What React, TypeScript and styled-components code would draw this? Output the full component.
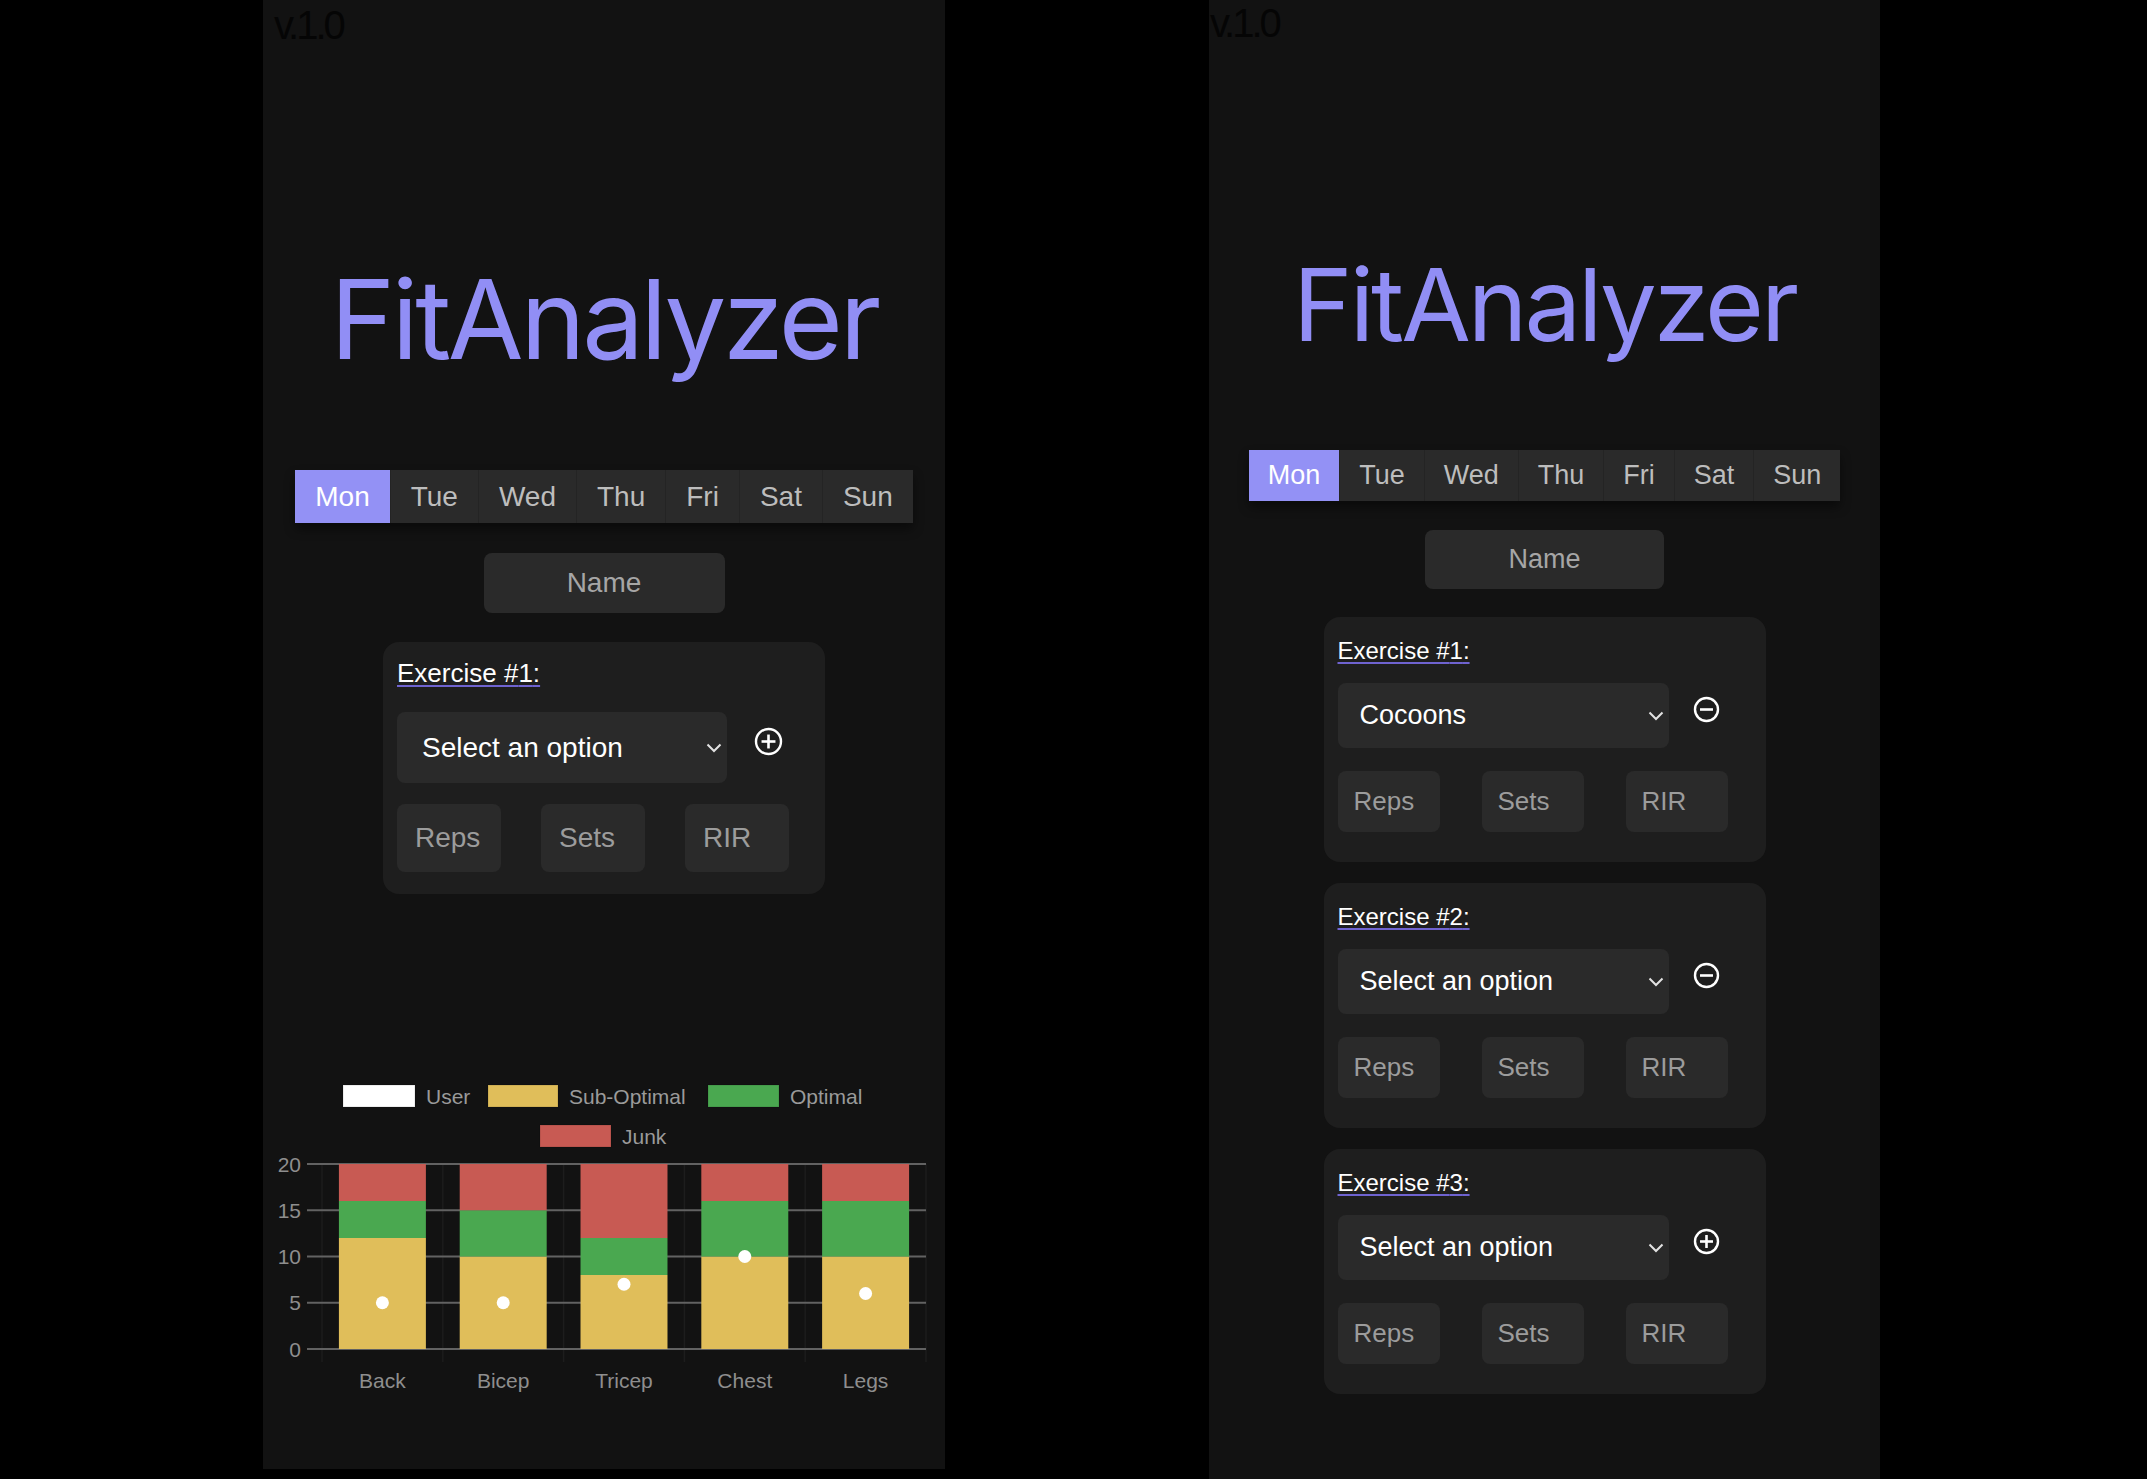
import styled, { createGlobalStyle } from "styled-components";

const GlobalStyle = createGlobalStyle`
  html, body {
    margin: 0;
    padding: 0;
    background: #000;
  }
  body {
    font-family: "Liberation Sans", Arial, sans-serif;
  }
  * {
    box-sizing: border-box;
  }
`;

interface Dims {
  width: number;
  height: number;
  verPad: number;
  verTop: number;
  titleSize: number;
  titleTop: number;
  tabsTop: number;
  tabH: number;
  tabFont: number;
  tabPad: number;
  nameTop: number;
  nameW: number;
  nameH: number;
  nameFont: number;
  cardTop: number;
  cardGap: number;
  padTop: number;
  padX: number;
  padBottom: number;
  labelFont: number;
  labelLH: number;
  labelGap: number;
  selW: number;
  selH: number;
  selFont: number;
  selPad: number;
  icon: number;
  iconGap: number;
  rowGap: number;
  inpW: number;
  inpH: number;
  inpGap: number;
  inpFont: number;
  inpPad: number;
}

const left: Dims = {
  width: 682,
  height: 1469,
  verPad: 11,
  verTop: 2,
  titleSize: 110,
  titleTop: 216,
  tabsTop: 96,
  tabH: 53,
  tabFont: 28,
  tabPad: 20,
  nameTop: 30,
  nameW: 241,
  nameH: 60,
  nameFont: 28,
  cardTop: 29,
  cardGap: 21,
  padTop: 16,
  padX: 14,
  padBottom: 22,
  labelFont: 26,
  labelLH: 30,
  labelGap: 24,
  selW: 330,
  selH: 71,
  selFont: 28,
  selPad: 25,
  icon: 29,
  iconGap: 27,
  rowGap: 21,
  inpW: 104,
  inpH: 68,
  inpGap: 40,
  inpFont: 28,
  inpPad: 18,
};

const right: Dims = {
  width: 671,
  height: 1479,
  verPad: 1,
  verTop: 0,
  titleSize: 101,
  titleTop: 208,
  tabsTop: 95,
  tabH: 51,
  tabFont: 27,
  tabPad: 19,
  nameTop: 29,
  nameW: 239,
  nameH: 59,
  nameFont: 27,
  cardTop: 28,
  cardGap: 21,
  padTop: 20,
  padX: 14,
  padBottom: 30,
  labelFont: 24,
  labelLH: 28,
  labelGap: 18,
  selW: 331,
  selH: 65,
  selFont: 27,
  selPad: 22,
  icon: 27,
  iconGap: 24,
  rowGap: 23,
  inpW: 102,
  inpH: 61,
  inpGap: 42,
  inpFont: 26,
  inpPad: 16,
};

const Page = styled.div`
  display: flex;
  align-items: flex-start;
  gap: 264px;
  padding-left: 263px;
  min-height: 1479px;
  background: #000;
`;

const Panel = styled.div<{ $d: Dims }>`
  width: ${(p) => p.$d.width}px;
  height: ${(p) => p.$d.height}px;
  background: #121212;
  display: flex;
  flex-direction: column;
  align-items: center;
`;

const Version = styled.div<{ $d: Dims }>`
  align-self: flex-start;
  margin-top: ${(p) => p.$d.verTop}px;
  padding-left: ${(p) => p.$d.verPad}px;
  font-size: 40px;
  line-height: 46px;
  letter-spacing: -3px;
  color: #050505;
`;

const Title = styled.h1<{ $d: Dims }>`
  margin: ${(p) => p.$d.titleTop}px 0 0;
  font-family: Inter, "Liberation Sans", sans-serif;
  font-weight: 400;
  font-size: ${(p) => p.$d.titleSize}px;
  line-height: 1;
  letter-spacing: -0.03em;
  color: #918ef5;
`;

const Tabs = styled.div<{ $d: Dims }>`
  display: flex;
  margin-top: ${(p) => p.$d.tabsTop}px;
  box-shadow: 0 6px 10px rgba(0, 0, 0, 0.45);
`;

const Tab = styled.div<{ $d: Dims; $active?: boolean }>`
  height: ${(p) => p.$d.tabH}px;
  padding: 0 ${(p) => p.$d.tabPad}px;
  display: flex;
  align-items: center;
  font-size: ${(p) => p.$d.tabFont}px;
  background: ${(p) => (p.$active ? "#9391f5" : "#2a2a2a")};
  color: ${(p) => (p.$active ? "#ffffff" : "#bdbdbd")};
  & + & {
    border-left: 1px solid #242424;
  }
`;

const NameInput = styled.input<{ $d: Dims }>`
  margin-top: ${(p) => p.$d.nameTop}px;
  width: ${(p) => p.$d.nameW}px;
  height: ${(p) => p.$d.nameH}px;
  border: none;
  border-radius: 8px;
  background: #2a2a2a;
  color: #fff;
  text-align: center;
  font-family: "Liberation Sans", Arial, sans-serif;
  font-size: ${(p) => p.$d.nameFont}px;
  outline: none;
  &::placeholder {
    color: #a6a6a6;
  }
`;

const CardList = styled.div<{ $d: Dims }>`
  margin-top: ${(p) => p.$d.cardTop}px;
  display: flex;
  flex-direction: column;
  gap: ${(p) => p.$d.cardGap}px;
`;

const Card = styled.div<{ $d: Dims }>`
  width: 442px;
  background: #1e1e1e;
  border-radius: 16px;
  padding: ${(p) => `${p.$d.padTop}px ${p.$d.padX}px ${p.$d.padBottom}px`};
`;

const Label = styled.div<{ $d: Dims }>`
  font-size: ${(p) => p.$d.labelFont}px;
  line-height: ${(p) => p.$d.labelLH}px;
  color: #fff;
  text-decoration: underline;
  text-decoration-color: #6f63d0;
  text-decoration-thickness: 2px;
  text-underline-offset: 3px;
`;

const SelectRow = styled.div<{ $d: Dims }>`
  display: flex;
  align-items: center;
  margin-top: ${(p) => p.$d.labelGap}px;
`;

const SelectBox = styled.div<{ $d: Dims }>`
  width: ${(p) => p.$d.selW}px;
  height: ${(p) => p.$d.selH}px;
  background: #2a2a2a;
  border-radius: 8px;
  display: flex;
  align-items: center;
  justify-content: space-between;
  padding: 0 5px 0 ${(p) => p.$d.selPad}px;
  font-size: ${(p) => p.$d.selFont}px;
  color: #fff;
`;

const IconButton = styled.div<{ $d: Dims }>`
  width: ${(p) => p.$d.icon}px;
  height: ${(p) => p.$d.icon}px;
  margin-left: ${(p) => p.$d.iconGap}px;
  margin-bottom: 12px;
  display: flex;
`;

const InputRow = styled.div<{ $d: Dims }>`
  display: flex;
  gap: ${(p) => p.$d.inpGap}px;
  margin-top: ${(p) => p.$d.rowGap}px;
`;

const SmallInput = styled.input<{ $d: Dims }>`
  width: ${(p) => p.$d.inpW}px;
  height: ${(p) => p.$d.inpH}px;
  border: none;
  border-radius: 8px;
  background: #2a2a2a;
  color: #fff;
  padding-left: ${(p) => p.$d.inpPad}px;
  font-family: "Liberation Sans", Arial, sans-serif;
  font-size: ${(p) => p.$d.inpFont}px;
  outline: none;
  &::placeholder {
    color: #9c9c9c;
  }
`;

const ChartSvg = styled.svg`
  margin-top: 176px;
  display: block;
  font-family: "Liberation Sans", Arial, sans-serif;
`;

const days = ["Mon", "Tue", "Wed", "Thu", "Fri", "Sat", "Sun"];

function Chevron() {
  return (
    <svg width="16" height="10" viewBox="0 0 16 10">
      <path d="M1.5 1.5 L8 8 L14.5 1.5" fill="none" stroke="#e2e2e2" strokeWidth="2" />
    </svg>
  );
}

function CircleIcon({ size, plus }: { size: number; plus: boolean }) {
  const c = size / 2;
  const r = c - 2;
  const arm = size * 0.24;
  return (
    <svg width={size} height={size} viewBox={`0 0 ${size} ${size}`}>
      <circle cx={c} cy={c} r={r} fill="none" stroke="#fff" strokeWidth="2.4" />
      <line x1={c - arm} y1={c} x2={c + arm} y2={c} stroke="#fff" strokeWidth="2.6" />
      {plus && <line x1={c} y1={c - arm} x2={c} y2={c + arm} stroke="#fff" strokeWidth="2.6" />}
    </svg>
  );
}

interface Exercise {
  n: number;
  value: string;
  plus: boolean;
}

function ExerciseCard({ d, ex }: { d: Dims; ex: Exercise }) {
  return (
    <Card $d={d}>
      <Label $d={d}>Exercise #{ex.n}:</Label>
      <SelectRow $d={d}>
        <SelectBox $d={d}>
          <span>{ex.value}</span>
          <Chevron />
        </SelectBox>
        <IconButton $d={d}>
          <CircleIcon size={d.icon} plus={ex.plus} />
        </IconButton>
      </SelectRow>
      <InputRow $d={d}>
        <SmallInput $d={d} placeholder="Reps" />
        <SmallInput $d={d} placeholder="Sets" />
        <SmallInput $d={d} placeholder="RIR" />
      </InputRow>
    </Card>
  );
}

function Header({ d }: { d: Dims }) {
  return (
    <>
      <Version $d={d}>v.1.0</Version>
      <Title $d={d}>FitAnalyzer</Title>
      <Tabs $d={d}>
        {days.map((day) => (
          <Tab key={day} $d={d} $active={day === "Mon"}>
            {day}
          </Tab>
        ))}
      </Tabs>
      <NameInput $d={d} placeholder="Name" />
    </>
  );
}

const muscles = [
  { label: "Back", sub: 12, opt: 4, junk: 4, user: 5 },
  { label: "Bicep", sub: 10, opt: 5, junk: 5, user: 5 },
  { label: "Tricep", sub: 8, opt: 4, junk: 8, user: 7 },
  { label: "Chest", sub: 10, opt: 6, junk: 4, user: 10 },
  { label: "Legs", sub: 10, opt: 6, junk: 4, user: 6 },
];

const YELLOW = "#e0be5a";
const GREEN = "#4aa850";
const RED = "#c85a53";

function VolumeChart() {
  const x0 = 59;
  const x1 = 663;
  const base = 279;
  const unit = 9.25;
  const cat = (x1 - x0) / muscles.length;
  const barW = cat * 0.72;
  const y = (v: number) => base - v * unit;
  const legend = [
    { x: 80, y: 15, w: 72, fill: "#ffffff", text: "User" },
    { x: 225, y: 15, w: 70, fill: YELLOW, text: "Sub-Optimal" },
    { x: 445, y: 15, w: 71, fill: GREEN, text: "Optimal" },
    { x: 277, y: 55, w: 71, fill: RED, text: "Junk" },
  ];
  return (
    <ChartSvg width="682" height="340" viewBox="0 0 682 340">
      {legend.map((l) => (
        <g key={l.text}>
          <rect x={l.x} y={l.y} width={l.w} height={22} fill={l.fill} stroke="rgba(0,0,0,0.15)" />
          <text x={l.x + l.w + 11} y={l.y + 19} fontSize="21" fill="#9a9a9a">
            {l.text}
          </text>
        </g>
      ))}
      {Array.from({ length: 6 }).map((_, i) => (
        <line
          key={`v${i}`}
          x1={x0 + i * cat}
          x2={x0 + i * cat}
          y1={y(20)}
          y2={base + 13}
          stroke="#1d1d1d"
          strokeWidth="1.5"
        />
      ))}
      {[0, 5, 10, 15, 20].map((v) => (
        <g key={`h${v}`}>
          <line x1={44} x2={x1} y1={y(v)} y2={y(v)} stroke="#626262" strokeWidth="2" />
          <text x={38} y={y(v) + 7.5} fontSize="21" fill="#8e8e8e" textAnchor="end">
            {v}
          </text>
        </g>
      ))}
      {muscles.map((m, i) => {
        const cx = x0 + cat * i + cat / 2;
        const bx = cx - barW / 2;
        return (
          <g key={m.label}>
            <rect x={bx} y={y(m.sub)} width={barW} height={m.sub * unit} fill={YELLOW} />
            <rect x={bx} y={y(m.sub + m.opt)} width={barW} height={m.opt * unit} fill={GREEN} />
            <rect
              x={bx}
              y={y(m.sub + m.opt + m.junk)}
              width={barW}
              height={m.junk * unit}
              fill={RED}
            />
            <circle cx={cx} cy={y(m.user)} r="6.5" fill="#fff" />
            <text x={cx} y={318} fontSize="21" fill="#8e8e8e" textAnchor="middle">
              {m.label}
            </text>
          </g>
        );
      })}
    </ChartSvg>
  );
}

export default function App() {
  return (
    <>
      <GlobalStyle />
      <Page>
        <Panel $d={left}>
          <Header d={left} />
          <CardList $d={left}>
            <ExerciseCard d={left} ex={{ n: 1, value: "Select an option", plus: true }} />
          </CardList>
          <VolumeChart />
        </Panel>
        <Panel $d={right}>
          <Header d={right} />
          <CardList $d={right}>
            <ExerciseCard d={right} ex={{ n: 1, value: "Cocoons", plus: false }} />
            <ExerciseCard d={right} ex={{ n: 2, value: "Select an option", plus: false }} />
            <ExerciseCard d={right} ex={{ n: 3, value: "Select an option", plus: true }} />
          </CardList>
        </Panel>
      </Page>
    </>
  );
}
